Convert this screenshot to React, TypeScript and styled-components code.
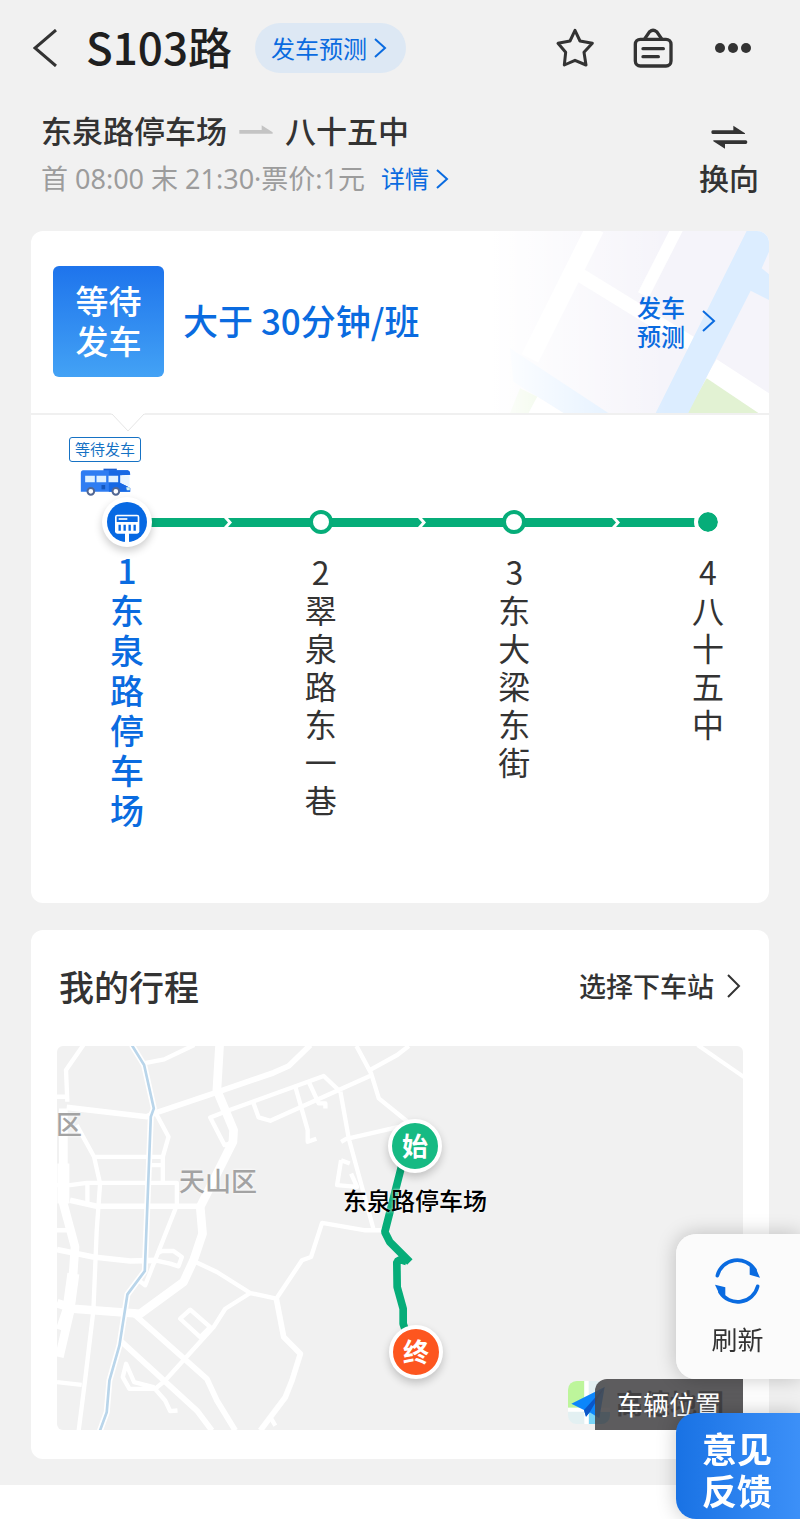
import React from 'react';
import styled, { createGlobalStyle, css } from 'styled-components';

const BLUE = '#0a6be0';
const GREEN = '#06ad79';
const INK = '#333333';

const GlobalStyle = createGlobalStyle`
  *, *::before, *::after { box-sizing: border-box; }
  body {
    margin: 0;
    background: #ffffff;
    color: ${INK};
    font-family: "Noto Sans CJK SC", sans-serif;
  }
  button { border: 0; padding: 0; background: none; color: inherit; font: inherit; cursor: pointer; }
  a { color: inherit; text-decoration: none; }
  h1, h2, p, ol { margin: 0; padding: 0; }
  svg { display: block; flex: none; }
`;

const Page = styled.div`
  background: #f1f1f1;
  padding: 16px 31px 26px;
`;

const TopBar = styled.header`
  display: flex;
  align-items: center;
  height: 64px;
`;

const IconButton = styled.button`
  display: grid;
  place-items: center;
  height: 48px;
`;

const BackButton = styled(IconButton)`
  padding-left: 2px;
`;

const LineName = styled.h1`
  margin-left: 28px;
  padding-bottom: 4px;
  font-size: 44px;
  line-height: 60px;
  font-weight: 500;
  color: #1f1f1f;
`;

const ForecastPill = styled.a`
  display: flex;
  align-items: center;
  gap: 6px;
  height: 50px;
  margin-left: 23px;
  padding: 0 19px 1px 16px;
  border-radius: 25px;
  background: #dde8f4;
  color: ${BLUE};
  font-size: 24px;
`;

const Actions = styled.div`
  display: flex;
  align-items: center;
  gap: 38px;
  margin-left: auto;
  padding-right: 18px;
`;

const RouteHead = styled.section`
  display: flex;
  justify-content: space-between;
  align-items: flex-start;
  padding: 30px 10px 0;
  height: 151px;
`;

const Terminals = styled.p`
  display: flex;
  align-items: center;
  gap: 12px;
  font-size: 31px;
  line-height: 40px;
  font-weight: 500;
`;

const Timetable = styled.p`
  display: flex;
  align-items: center;
  gap: 16px;
  margin-top: 10px;
  font-family: "Noto Sans", "Noto Sans CJK SC", sans-serif;
  font-size: 27px;
  line-height: 38px;
  color: #9c9c9c;
`;

const DetailLink = styled.a`
  display: flex;
  align-items: center;
  gap: 6px;
  color: ${BLUE};
  font-size: 24px;
`;

const SwapButton = styled.button`
  display: flex;
  flex-direction: column;
  align-items: center;
  gap: 6px;
  padding-top: 15px;
  font-size: 30px;
  line-height: 44px;
  font-weight: 500;
`;

const Card = styled.section`
  border-radius: 12px;
  background: #ffffff;
  overflow: hidden;
`;

const LineCard = styled(Card)`
  min-height: 672px;
`;

const Departure = styled.div`
  position: relative;
  display: flex;
  align-items: center;
  height: 184px;
  padding: 0 53px 2px 22px;
  border-bottom: 2px solid #f0f0f0;
`;

const Backdrop = styled.svg`
  position: absolute;
  top: 0;
  right: 0;
`;

const Notch = styled.svg`
  position: absolute;
  left: 80px;
  bottom: -20px;
`;

const StatusTile = styled.div`
  display: grid;
  place-items: center;
  width: 111px;
  height: 111px;
  padding-bottom: 2px;
  border-radius: 6px;
  background: linear-gradient(#1e74ec, #43a2f5);
  color: #ffffff;
  font-size: 33px;
  line-height: 40px;
  font-weight: 500;
  text-align: center;
`;

const Interval = styled.p`
  margin-left: 19px;
  padding-bottom: 2px;
  color: ${BLUE};
  font-size: 35px;
  line-height: 48px;
  font-weight: 500;
`;

const ForecastLink = styled.a`
  position: relative;
  display: flex;
  align-items: center;
  gap: 16px;
  margin-left: auto;
  color: ${BLUE};
  font-size: 24px;
  line-height: 29px;
  font-weight: 500;
`;

const BusStatus = styled.div`
  display: flex;
  flex-direction: column;
  align-items: center;
  gap: 6px;
  width: 72px;
  margin: 22px 0 0 38px;
`;

const BusTag = styled.span`
  width: 72px;
  height: 25px;
  border: 1px solid #1672c4;
  border-radius: 3px;
  color: #1672c4;
  font-size: 15px;
  line-height: 22px;
  text-align: center;
`;

const Track = styled.div`
  display: grid;
  grid-template-columns: 50px 1fr 50px 1fr 50px 1fr 50px;
  align-items: center;
  justify-items: center;
  height: 50px;
  margin-top: 1px;
  padding: 0 36px 0 71px;
`;

const CurrentMarker = styled.span`
  position: relative;
  z-index: 1;
  display: grid;
  place-items: center;
  width: 50px;
  height: 50px;
  border-radius: 50%;
  background: #ffffff;
  box-shadow: 0 4px 8px rgba(0, 0, 0, 0.2);
`;

const StopMarker = styled.span<{ $last?: boolean }>`
  position: relative;
  z-index: 1;
  width: 24px;
  height: 24px;
  border: 4px solid ${GREEN};
  border-radius: 50%;
  background: #ffffff;
  ${({ $last }) => $last && css`
    width: 28px;
    height: 28px;
    border-color: #ffffff;
    background: ${GREEN};
    background-clip: padding-box;
  `}
`;

const Segment = styled.span`
  display: flex;
  align-items: center;
  justify-self: stretch;
  margin: 0 -25px;
`;

const Bar = styled.i<{ $lead?: boolean }>`
  flex: 1 1 ${({ $lead }) => ($lead ? '10px' : '0px')};
  height: 9px;
  background: ${GREEN};
`;

const Stops = styled.ol`
  display: flex;
  justify-content: space-between;
  margin-top: 5px;
  padding: 0 36px 0 71px;
  list-style: none;
`;

const Stop = styled.li<{ $current?: boolean }>`
  display: flex;
  justify-content: center;
  width: 50px;
  margin-top: ${({ $current }) => ($current ? -2 : 0)}px;
  font-size: ${({ $current }) => ($current ? 34 : 32)}px;
  line-height: ${({ $current }) => ($current ? 40 : 38)}px;
  font-weight: ${({ $current }) => ($current ? 500 : 400)};
  color: ${({ $current }) => ($current ? BLUE : INK)};
`;

const StopLink = styled.a`
  width: 1em;
  text-align: center;
  word-break: break-all;
`;

const TripCard = styled(Card)`
  margin-top: 27px;
  padding: 26px 26px 29px;
`;

const TripHead = styled.div`
  display: flex;
  align-items: center;
  justify-content: space-between;
  height: 60px;
  margin-bottom: 30px;
  padding: 0 2px;
`;

const TripTitle = styled.h2`
  font-size: 35px;
  line-height: 56px;
  font-weight: 500;
`;

const PickStop = styled.button`
  display: flex;
  align-items: center;
  gap: 12px;
  font-size: 27px;
  line-height: 40px;
  font-weight: 500;
`;

const MapView = styled.div`
  position: relative;
  height: 384px;
  border-radius: 6px;
  background: #f1f1f1;
  overflow: hidden;
`;

const MapLabel = styled.span<{ $x: number; $y: number; $strong?: boolean }>`
  position: absolute;
  left: ${({ $x }) => $x}px;
  top: ${({ $y }) => $y}px;
  white-space: nowrap;
  font-size: ${({ $strong }) => ($strong ? 24 : 26)}px;
  line-height: 32px;
  font-weight: 500;
  color: ${({ $strong }) => ($strong ? '#000000' : '#a3a3a3')};
  text-shadow: 0 0 3px #ffffff;
`;

const Pin = styled.span<{ $x: number; $y: number; $color: string }>`
  position: absolute;
  left: ${({ $x }) => $x}px;
  top: ${({ $y }) => $y}px;
  display: grid;
  place-items: center;
  width: 54px;
  height: 54px;
  padding-bottom: 2px;
  border: 4px solid #ffffff;
  border-radius: 50%;
  background: ${({ $color }) => $color};
  box-shadow: 0 4px 8px rgba(0, 0, 0, 0.2);
  color: #ffffff;
  font-size: 26px;
  line-height: 40px;
  font-weight: 700;
`;

const Provider = styled.div`
  position: absolute;
  right: 19px;
  bottom: 6px;
  display: flex;
  align-items: center;
  gap: 6px;
  color: #111111;
  font-size: 27px;
  line-height: 42px;
  font-weight: 700;
`;

const VehicleButton = styled.button`
  position: absolute;
  right: 0;
  bottom: 0;
  height: 51px;
  padding: 0 22px 2px;
  border-radius: 12px 0 6px 0;
  background: rgba(72, 71, 73, 0.88);
  color: #ffffff;
  font-size: 26px;
`;

const Footer = styled.footer`
  height: 34px;
  background: #ffffff;
`;

const Floating = styled.button`
  position: fixed;
  right: 0;
  z-index: 2;
  display: flex;
  flex-direction: column;
  align-items: center;
  justify-content: center;
  width: 124px;
  border-radius: 20px 0 0 20px;
  box-shadow: 0 0 20px rgba(0, 0, 0, 0.22);
`;

const RefreshButton = styled(Floating)`
  bottom: 140px;
  height: 145px;
  gap: 14px;
  padding-right: 1px;
  background: rgba(251, 251, 251, 0.97);
  font-size: 26px;
  line-height: 38px;
`;

const FeedbackButton = styled(Floating)`
  bottom: 0;
  height: 106px;
  padding: 6px 2px 0 0;
  background: linear-gradient(90deg, #1972e4, #3c90f8);
  color: #ffffff;
  font-size: 35px;
  line-height: 42px;
  font-weight: 700;
`;

function Chevron({ width, height, stroke = 2, left = false }: { width: number; height: number; stroke?: number; left?: boolean }) {
  const a = left ? width - 2 : 2;
  const b = left ? 2 : width - 2;
  return (
    <svg width={width} height={height} fill="none" stroke="currentColor" strokeWidth={stroke} aria-hidden="true">
      <path d={`M${a} 1L${b} ${height / 2}L${a} ${height - 1}`} />
    </svg>
  );
}

const StarIcon = () => (
  <svg width="40" height="42" viewBox="406 82 120 126" fill="none" stroke={INK} strokeWidth="9" strokeLinejoin="round">
    <path d="M466 92L481 124L518 131L493 158L499 196L466 182L434 196L438 158L415 131L451 124Z" />
  </svg>
);

const BoardIcon = () => (
  <svg width="40" height="42" viewBox="640 82 120 126" fill="none" stroke={INK} strokeWidth="10" strokeLinecap="round">
    <rect x="647" y="119" width="107" height="80" rx="15" />
    <path d="M676 116L690 96Q700 87 711 96L725 116M670 147H731M670 171H716" />
  </svg>
);

const MoreIcon = () => (
  <svg width="40" height="12" viewBox="-4 0 40 12" fill={INK}>
    <circle cx="5" cy="6" r="5" />
    <circle cx="18" cy="6" r="5" />
    <circle cx="31" cy="6" r="5" />
  </svg>
);

const SwapIcon = () => (
  <svg width="37" height="24" viewBox="872 377 111 72" fill={INK}>
    <path d="M877 393H939V379L974 402V404H877Q873 404 873 398Q873 393 877 393Z" />
    <path d="M976 434H914V448L879 426V423H976Q981 423 981 428Q981 434 976 434Z" />
  </svg>
);

const DirectionArrow = () => (
  <svg width="34" height="10" viewBox="710 383 102 30" fill="#c4c4c4">
    <path d="M711 398H778V384L811 405V409H711Z" />
  </svg>
);

const BusIcon = () => (
  <svg width="51" height="28" viewBox="90 172 152 84">
    <path d="M160 174H200V184H160Z" fill="#1d5fd0" />
    <path d="M98 179H232Q240 180 240 192L214 194V218L240 232V243H92V186Q92 180 98 179Z" fill="#2f7df2" />
    <path d="M176 179H232Q240 180 240 192L214 194V218L240 232V243H176Z" fill="#1769e4" />
    <path d="M210 194H238V228L210 216Z" fill="#e9f5ff" />
    <path d="M105 195H134V215H105ZM139 195H168V215H139ZM175 195H204V215H175Z" fill="#dff1ff" />
    <path d="M154 223H165V236H154Z" fill="#1457bd" />
    <path d="M228 230H239V239H230Z" fill="#d7f3ee" />
    <circle cx="122" cy="242" r="10" fill="#ffffff" stroke="#516794" strokeWidth="6" />
    <circle cx="197" cy="242" r="10" fill="#ffffff" stroke="#516794" strokeWidth="6" />
  </svg>
);

const StationIcon = () => (
  <svg width="40" height="40" viewBox="172 277 120 120">
    <circle cx="232" cy="337" r="60" fill="#0769e3" />
    <path d="M226 370H238V397H226Z" fill="#ffffff" />
    <rect x="196" y="315" width="73" height="57" rx="7" fill="#ffffff" />
    <path d="M201 320H264V337H201Z" fill="#0769e3" />
    <path d="M207 328H233" stroke="#ffffff" strokeWidth="5" />
    <path d="M210 345V363M225 345V363M240 345V363M255 345V363" stroke="#0769e3" strokeWidth="7" />
  </svg>
);

const TrackChevron = () => (
  <svg width="9" height="9" viewBox="0 0 9 9" fill={GREEN}>
    <path d="M0 0L4 4.5L0 9Z" />
    <path d="M4 0H9V9H4L8 4.5Z" />
  </svg>
);

const RefreshIcon = () => (
  <svg width="49" height="50" viewBox="520 166 147 150">
    <g fill="none" stroke={BLUE} strokeWidth="11" strokeLinecap="round">
      <path d="M533 225A62 62 0 0 1 646 208" />
      <path d="M654 257A62 62 0 0 1 541 274" />
    </g>
    <path d="M630 196L648 202L661 231L630 222Z" fill={BLUE} />
    <path d="M557 286L539 280L526 252L557 260Z" fill={BLUE} />
  </svg>
);

const ProviderLogo = () => (
  <svg width="42" height="43" viewBox="84 542 126 129">
    <clipPath id="logo"><rect x="84" y="542" width="126" height="129" rx="26" /></clipPath>
    <g clipPath="url(#logo)">
      <path d="M84 542H210V671H84Z" fill="#e3f0f2" />
      <path d="M84 542H133V622H84Z" fill="#bdf59b" />
      <path d="M146 634H210V671H146Z" fill="#79d5f8" />
      <path d="M133 542H146V671H133ZM84 622H210V634H84Z" fill="#ffffff" />
    </g>
    <path d="M94 610L194 560L178 654L149 636L138 649L132 629Z" fill="#0c86fb" />
    <path d="M194 560L132 629L138 649L149 636Z" fill="#0a56c8" />
  </svg>
);

const CityBackdrop = () => (
  <Backdrop width="339" height="182" viewBox="0 18 1017 546" aria-hidden="true">
    <defs>
      <linearGradient id="fade">
        <stop offset="0.18" stopColor="#ffffff" />
        <stop offset="0.7" stopColor="#ffffff" stopOpacity="0" />
      </linearGradient>
    </defs>
    <path d="M0 18H1017V564H0Z" fill="#f5f4fa" />
    <g stroke="#ffffff" fill="none">
      <path d="M495 10L300 400" strokeWidth="56" />
      <path d="M742 10L640 210" strokeWidth="36" />
      <path d="M450 150L800 365" strokeWidth="42" />
    </g>
    <path d="M860 403L1017 505V564H985L825 460Z" fill="#ffffff" />
    <path d="M240 370L535 564H400L250 470Z" fill="#dcedff" />
    <path d="M270 490L322 515L296 564H240Z" fill="#d8f0c4" />
    <path d="M322 515L400 564H296Z" fill="#ffffff" />
    <path d="M830 460L985 564H770Z" fill="#e2f2d3" />
    <path d="M677 564L950 18H1017V80L995 130L1017 148V225L962 197L775 564Z" fill="#dcedff" />
    <path d="M0 18H1017V564H0Z" fill="url(#fade)" />
  </Backdrop>
);

const CityMap = () => (
  <svg width="100%" height="384" viewBox="81 48 2055 1152" preserveAspectRatio="xMinYMin slice" aria-hidden="true">
    <g fill="none" stroke="#ffffff" strokeLinejoin="round">
      <g strokeWidth="13">
        <path d="M160 45L108 120L112 215M81 200H110M340 100L402 88L492 45" />
        <path d="M372 240L415 320L398 380V455M362 405H398M195 380H400M140 285L192 380L210 460L200 600L190 840L165 1050L146 1200" />
        <path d="M81 465H120L170 458H440V525L345 765L325 750M172 460V520M81 600H125" />
        <path d="M380 670L395 662H430L455 680L445 708L420 700L375 690" />
        <path d="M592 242L880 138L930 185M592 242L540 262L583 345L600 340M668 215L685 262L720 272L1025 135M795 170L832 300V335L858 326M835 155L865 220H885V235" />
        <path d="M978 48L1022 130L1045 205L1150 290M1022 118L1100 75L1135 48M930 185L955 325L1030 600M955 325L1105 290M932 335L950 325" />
        <path d="M932 390L920 465L980 470L962 430M932 390L958 400" />
        <path d="M1055 600H1005L875 578L842 680L815 690L738 805L660 788L560 725L490 692" />
        <path d="M660 788L585 835L550 890L405 1050L375 1075H298L278 1040L288 1000L312 1055L370 1070L405 1110L420 1142L442 1140" />
        <path d="M510 920L450 865L480 838L540 890ZM81 1055L155 1063M720 1160L735 1185" />
      </g>
      <g strokeWidth="17">
        <path d="M110 232L350 260L372 250L550 190L730 128L775 108L840 45" />
        <path d="M120 510L200 528H520M81 658L190 680L300 692L380 690" />
        <path d="M310 850L530 1045L560 1110L615 1200M270 930L500 1140L545 1200" />
        <path d="M738 805L760 920L810 970L785 1050L765 1100L690 1200" />
      </g>
      <g strokeWidth="26">
        <path d="M568 45L560 180L610 300L608 335L510 530L517 610L490 690L460 755L330 850L130 835L81 818" />
        <path d="M100 235V520L135 650L125 790L118 850L88 980" />
      </g>
      <path d="M100 400V520M130 730L115 840L95 900" strokeWidth="36" />
      <path d="M305 45L342 105L371 235L362 260L344 722L292 792L268 945L238 1050L230 1145L208 1205" strokeWidth="18" />
      <path d="M2000 45L2145 145" strokeWidth="12" />
    </g>
    <path d="M305 45L342 105L371 235L362 260L344 722L292 792L268 945L238 1050L230 1145L208 1205" fill="none" stroke="#b9d5ea" strokeWidth="8" />
    <g fill="none" stroke={GREEN} strokeWidth="23" strokeLinejoin="bevel">
      <path d="M1114 405L1063 605L1078 635L1138 695" />
      <path d="M1128 694L1110 688L1099 694L1100 770L1118 835V880L1128 910" />
    </g>
  </svg>
);

const stops = ['东泉路停车场', '翠泉路东一巷', '东大梁东街', '八十五中'];

export default function App() {
  return (
    <>
      <GlobalStyle />
      <Page>
        <TopBar>
          <BackButton aria-label="返回"><Chevron width={25} height={38} stroke={3} left /></BackButton>
          <LineName>S103路</LineName>
          <ForecastPill href="#forecast">发车预测<Chevron width={14} height={20} /></ForecastPill>
          <Actions>
            <IconButton aria-label="收藏"><StarIcon /></IconButton>
            <IconButton aria-label="站牌"><BoardIcon /></IconButton>
            <IconButton aria-label="更多"><MoreIcon /></IconButton>
          </Actions>
        </TopBar>

        <RouteHead>
          <div>
            <Terminals>东泉路停车场<DirectionArrow />八十五中</Terminals>
            <Timetable>
              <span>首 08:00 末 21:30·票价:1元</span>
              <DetailLink href="#detail">详情<Chevron width={14} height={20} /></DetailLink>
            </Timetable>
          </div>
          <SwapButton><SwapIcon />换向</SwapButton>
        </RouteHead>

        <LineCard>
          <Departure>
            <CityBackdrop />
            <Notch width="34" height="20" viewBox="0 0 34 20" aria-hidden="true">
              <path d="M0 0L17 18L34 0Z" fill="#ffffff" />
              <path d="M1 1L17 18L33 1" fill="none" stroke="#e6e6e6" strokeWidth="1" />
            </Notch>
            <StatusTile>等待<br />发车</StatusTile>
            <Interval>大于 30分钟/班</Interval>
            <ForecastLink href="#forecast">
              <span>发车<br />预测</span>
              <Chevron width={15} height={22} stroke={2} />
            </ForecastLink>
          </Departure>
          <BusStatus>
            <BusTag>等待发车</BusTag>
            <BusIcon />
          </BusStatus>
          <Track>
            <CurrentMarker><StationIcon /></CurrentMarker>
            {stops.slice(1).map((name, i) => (
              <React.Fragment key={name}>
                <Segment><Bar $lead /><TrackChevron /><Bar /></Segment>
                <StopMarker $last={i === stops.length - 2} />
              </React.Fragment>
            ))}
          </Track>
          <Stops>
            {stops.map((name, i) => (
              <Stop key={name} $current={i === 0}>
                <StopLink href={`#stop-${i + 1}`}>{i + 1}{name}</StopLink>
              </Stop>
            ))}
          </Stops>
        </LineCard>

        <TripCard>
          <TripHead>
            <TripTitle>我的行程</TripTitle>
            <PickStop>选择下车站<Chevron width={15} height={24} stroke={2} /></PickStop>
          </TripHead>
          <MapView>
            <CityMap />
            <MapLabel $x={-1} $y={61}>区</MapLabel>
            <MapLabel $x={122} $y={118}>天山区</MapLabel>
            <Pin $x={331} $y={73} $color="#16ba83">始</Pin>
            <Pin $x={332} $y={279} $color="#fd561f">终</Pin>
            <MapLabel $x={286} $y={138} $strong>东泉路停车场</MapLabel>
            <Provider><ProviderLogo />高德地图</Provider>
            <VehicleButton>车辆位置</VehicleButton>
          </MapView>
        </TripCard>
      </Page>
      <Footer />
      <RefreshButton><RefreshIcon />刷新</RefreshButton>
      <FeedbackButton>意见<br />反馈</FeedbackButton>
    </>
  );
}
